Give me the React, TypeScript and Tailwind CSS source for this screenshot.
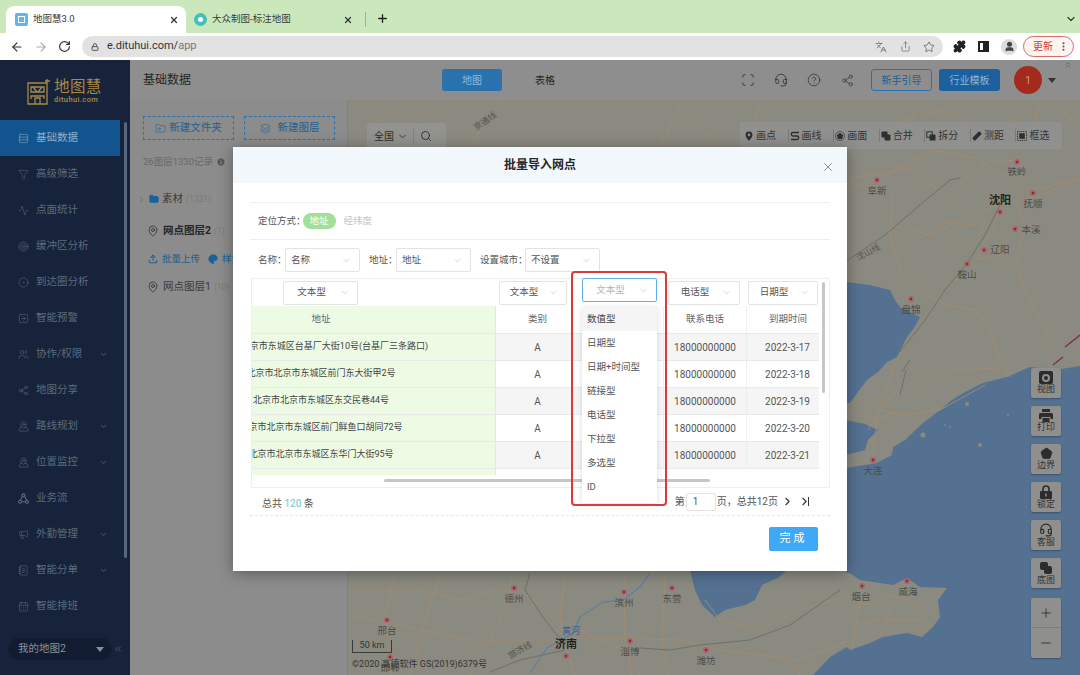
import React from 'react';
import {
  ArrowLeft, ArrowRight, RotateCw, Lock, Share, Star, Puzzle, User, X, Plus, ChevronDown, ChevronRight, ChevronsUp,
  ChevronsLeft, Scan, CircleHelp, Share2, Search, Languages, MoreVertical, Folder, MapPin, Upload, Palette, Info,
  Funnel, Target, CircleDot, Users, Megaphone, NotebookText, CalendarDays, Pentagon, Headset, Minus,
  Rows3, Activity, SquareArrowRight, FolderInput, Layers, MapPinned,
} from 'lucide-react';

const sans = "font-['Roboto','Noto_Sans_CJK_SC',sans-serif]";

const FlowIcon: React.FC<{ size?: number; strokeWidth?: number }> = ({ size = 11, strokeWidth = 1.2 }) => (
  <svg width={size} height={size} viewBox="0 0 12 12" fill="none" stroke="currentColor" strokeWidth={strokeWidth}>
    <circle cx="6" cy="2.5" r="1.6" />
    <circle cx="2.2" cy="9.5" r="1.6" />
    <circle cx="9.8" cy="9.5" r="1.6" />
    <path d="M4.6 3.8 2.8 7.5M7.4 3.8l1.8 3.7M4 9.500h4" />
  </svg>
);

const menu = [
  { label: '基础数据', icon: Rows3, active: true },
  { label: '高级筛选', icon: Funnel },
  { label: '点面统计', icon: Activity },
  { label: '缓冲区分析', icon: Target },
  { label: '到达圈分析', icon: CircleDot },
  { label: '智能预警', icon: SquareArrowRight },
  { label: '协作/权限', icon: Users, arrow: true },
  { label: '地图分享', icon: Share2 },
  { label: '路线规划', icon: MapPinned, arrow: true },
  { label: '位置监控', icon: MapPinned, arrow: true },
  { label: '业务流', icon: FlowIcon },
  { label: '外勤管理', icon: Megaphone, arrow: true },
  { label: '智能分单', icon: NotebookText, arrow: true },
  { label: '智能排班', icon: CalendarDays },
];

const rows = [
  { addr: '北京市北京市东城区台基厂大街10号(台基厂三条路口)', date: '2022-3-17' },
  { addr: '北京市北京市东城区前门东大街甲2号', date: '2022-3-18' },
  { addr: '北京市北京市东城区东交民巷44号', date: '2022-3-19' },
  { addr: '北京市北京市东城区前门鲜鱼口胡同72号', date: '2022-3-20' },
  { addr: '北京市北京市东城区东华门大街95号', date: '2022-3-21' },
];

const types = ['数值型', '日期型', '日期+时间型', '链接型', '电话型', '下拉型', '多选型', 'ID'];

const cities = [
  { n: '阜新', x: 877, y: 180, lx: 877, ly: 194 }, { n: '铁岭', x: 1017, y: 162, lx: 1017, ly: 175 },
  { n: '沈阳', x: 1000, y: 212, lx: 1000, ly: 204, bold: true }, { n: '抚顺', x: 1033, y: 193, lx: 1033, ly: 207 },
  { n: '本溪', x: 1015, y: 229, lx: 1031, ly: 233 }, { n: '辽阳', x: 984, y: 250, lx: 1000, ly: 253 },
  { n: '鞍山', x: 967, y: 264, lx: 967, ly: 278 }, { n: '盘锦', x: 911, y: 299, lx: 911, ly: 313 },
  { n: '大连', x: 873, y: 460, lx: 873, ly: 474 }, { n: '烟台', x: 862, y: 586, lx: 861, ly: 600 },
  { n: '威海', x: 907, y: 581, lx: 908, ly: 595 }, { n: '德州', x: 514, y: 588, lx: 514, ly: 602 },
  { n: '滨州', x: 624, y: 592, lx: 624, ly: 606 }, { n: '东营', x: 672, y: 588, lx: 672, ly: 602 },
  { n: '邢台', x: 387, y: 620, lx: 387, ly: 634 }, { n: '济南', x: 566, y: 656, lx: 566, ly: 648, bold: true },
  { n: '淄博', x: 630, y: 641, lx: 630, ly: 655 }, { n: '潍坊', x: 706, y: 650, lx: 706, ly: 664 },
  { n: '邯郸', x: 390, y: 657, lx: 390, ly: 671 },
];

const roads = [
  'M850 178 L890 172 L935 150 L975 158 L1005 175 L1035 190 L1080 178',
  'M848 190 L877 178 L905 168 L925 180 L950 198 L962 180 L990 162 L1017 160 L1030 145 L1040 100',
  'M895 250 L915 240 L950 225 L975 212 L1000 205 L1040 195 L1080 180',
  'M892 195 L890 240 L900 270 L920 290 L945 305 L975 310 L990 330 L1003 365 L1010 377',
  'M1000 205 L990 235 L975 262 L960 275 L940 295 L925 320 L905 345 L890 375 L878 410 L873 455',
  'M945 225 L960 245 L980 235 L985 220 M975 260 L1000 255 L1020 245 L1025 225 L1015 200',
  'M1015 255 L1025 290 L1040 320 L1055 345',
  'M890 225 L930 235 L945 222 L975 225',
  'M905 362 L925 385 L950 370 L1000 368 M880 410 L900 415 L940 410 L985 385',
  'M915 110 L905 147 M1040 105 L1030 125 M890 125 L940 110 L980 130 L1020 118 M1060 105 L1075 125',
  'M500 100 L470 147 M440 105 L380 147 M360 130 L400 110 M680 105 L660 147 M690 120 L720 147 M760 105 L745 147',
  'M348 615 L400 625 L470 640 L550 640 L600 638 L680 640 L720 650 L800 660 L850 640',
  'M395 573 L385 620 L390 660 L392 675 M440 573 L420 640 L410 675 M512 573 L510 600 L490 640 L470 675',
  'M348 590 L420 590 L460 600 L512 585 L560 620 L600 640 L625 650 L640 675',
  'M565 573 L560 620 L566 650 L575 675 M624 573 L625 640 L632 675 M665 573 L662 640 L668 675',
  'M705 600 L720 620 L760 630 L800 610 L850 595 M700 650 L720 630 M780 650 L800 675',
  'M850 600 L870 605 L890 595 L907 600 L925 610 M862 590 L855 630 L852 650 M905 585 L890 610 L880 635',
  'M850 625 L880 620 L925 620 M868 430 L880 410 L900 385 M850 408 L875 420 L900 410',
];

const rails = [
  'M845 262 L885 235 L920 205 L950 180 L960 178',
  'M1000 205 L985 235 L968 262 L945 290 L925 320 L900 352',
  'M530 573 L525 590 L545 620 L565 645 M565 650 L520 660 L490 672',
  'M640 648 L670 650 L700 645 L750 640 L790 625 L840 590',
  'M906 370 L900 395 M910 360 L902 372',
];

// Selects in the dialog share this look
const Pick: React.FC<{ text: string; className?: string; center?: boolean; muted?: boolean }> = ({ text, className, center, muted }) => (
  <div className={`relative flex shrink-0 items-center rounded-[2px] border bg-white ${muted ? 'border-[#64ade8]' : 'border-[#e3e3e3]'} ${center ? 'justify-center' : 'pl-[5px]'} ${className}`}>
    <span className={`text-[9.5px] ${muted ? 'text-[#b4b4b4]' : 'text-[#555]'} ${center ? 'pr-[18px]' : ''}`}>{text}</span>
    <ChevronDown size={11} strokeWidth={1} className="absolute right-[7px] text-[#aaa]" />
  </div>
);

const ToolIcon: React.FC<{ kind: number }> = ({ kind }) => {
  const c = '#2e2f30';
  return (
    <svg width="10" height="10" viewBox="0 0 10 10">
      {kind === 0 && <path d="M5 .5a3.4 3.4 0 0 0-3.4 3.4C1.6 6.3 5 9.7 5 9.7S8.4 6.3 8.4 3.9A3.4 3.4 0 0 0 5 .5zm0 4.7a1.3 1.3 0 1 1 0-2.6 1.3 1.3 0 0 1 0 2.600z" fill={c} />}
      {kind === 1 && <path d="M9 1.5H3a1.7 1.7 0 0 0 0 3.5h4a1.7 1.7 0 0 1 0 3.5H1" fill="none" stroke={c} strokeWidth="1.3" />}
      {kind === 2 && <><circle cx="5" cy="5" r="4.5" fill="none" stroke={c} strokeWidth=".6" /><path d="M5 1.8 8.2 4.2 7 8H3L1.8 4.2z" fill={c} /></>}
      {kind === 3 && <><rect x=".5" y=".5" width="6" height="6" rx="1" fill={c} /><rect x="3.5" y="3.5" width="6" height="6" rx="1" fill={c} /></>}
      {kind === 4 && <><rect x=".8" y=".8" width="5.5" height="5.5" fill="none" stroke={c} /><rect x="3.5" y="3.5" width="6" height="6" rx=".6" fill={c} /></>}
      {kind === 5 && <path d="M.8 6.5 6.2 1a1.5 1.5 0 0 1 2 0l.8.8a1.5 1.5 0 0 1 0 2L3.5 9.2a1 1 0 0 1-1.4 0L.8 7.9a1 1 0 0 1 0-1.400z" fill={c} />}
      {kind === 6 && <><rect x=".5" y=".5" width="9" height="9" fill="none" stroke={c} strokeDasharray="1 .8" /><rect x="2.2" y="2.2" width="5.6" height="5.6" fill={c} /></>}
    </svg>
  );
};

const MapView: React.FC = () => (
  <svg viewBox="348 100 732 575" className="block h-full w-full">
    <rect x="348" y="100" width="732" height="575" fill="#8b8a80" />
    <g fill="#557192">
      <path d="M846 282 L870 285 L890 290 L895 300 L900 307 L920 317 L914 328 L907 337 L897 357 L887 362 L878 372 L867 380 L858 392 L850 403 L846 403Z" />
      <path d="M846 420 L865 424 L878 430 L868 440 L865 450 L846 455Z" />
      <path d="M846 468 L877 463 L892 455 L893 447 L905 440 L923 423 L940 410 L952 400 L963 393 L983 383 L1007 377 L1030 367 L1055 370 L1080 366 L1080 675 L813 675 L830 657 L847 647 L850 650 L870 643 L883 637 L907 633 L922 637 L933 627 L940 617 L938 600 L947 588 L920 587 L907 578 L893 585 L860 580 L850 573 L846 573Z" />
      <path d="M690 570 L787 570 L778 578 L762 585 L755 600 L745 605 L725 610 L715 617 L702 605 L695 590Z" />
    </g>
    <g fill="#8b8a80">
      <circle cx="967" cy="404" r="2" /><circle cx="923" cy="435" r="2.5" /><circle cx="980" cy="445" r="2" />
      <circle cx="950" cy="427" r="1" /><circle cx="945" cy="425" r="1" /><circle cx="1008" cy="415" r="1" />
    </g>
    <g fill="none" stroke="#a28b70" strokeWidth="0.9">
      {roads.map((d, i) => <path key={i} d={d} />)}
    </g>
    <g fill="none" stroke="#6f6f6b" strokeWidth="1">
      {rails.map((d, i) => <path key={i} d={d} />)}
    </g>
    <path d="M650 573 L640 587 L623 600 L603 602 L580 617 L573 633 L547 648 L530 673" fill="none" stroke="#627f9f" strokeWidth="1.3" />
    <path d="M1065 347 L1080 335 M1053 365 L1063 357" fill="none" stroke="#7d3245" strokeWidth="1.5" />
    <g className="font-['Noto_Sans_CJK_SC',sans-serif]">
      {cities.map((c) => (
        <g key={c.n}>
          <circle cx={c.x} cy={c.y} r="3" fill="#a8646a" />
          <circle cx={c.x} cy={c.y} r="1.2" fill="#832c34" />
          <text x={c.lx} y={c.ly} textAnchor="middle" fontSize={c.bold ? 11 : 9.5} fontWeight={c.bold ? 600 : 400} fill={c.bold ? '#222' : '#4c4c48'}>{c.n}</text>
        </g>
      ))}
      <text x="571" y="634" textAnchor="middle" fontSize="9" fill="#3a6090">黄河</text>
      <text x="868" y="255" textAnchor="middle" fontSize="8.5" fill="#55554f" transform="rotate(-28 868 252)">沈山线</text>
      <text x="520" y="653" textAnchor="middle" fontSize="8.5" fill="#55554f" transform="rotate(-30 520 650)">邯济线</text>
      <text x="485" y="124" textAnchor="middle" fontSize="8.5" fill="#55554f" transform="rotate(-35 485 121)">京通线</text>
    </g>
  </svg>
);

const PrinterGlyph = () => (
  <svg width="14" height="13" viewBox="0 0 14 13" fill="#2c2c2c">
    <rect x="3" y="0" width="8" height="3" />
    <path d="M1.5 4h11A1.5 1.5 0 0 1 14 5.5V10h-2.5V8h-9v2H0V5.5A1.5 1.5 0 0 1 1.5 4z" />
    <rect x="3.5" y="9" width="7" height="4" />
  </svg>
);

const LockGlyph = () => (
  <svg width="12" height="14" viewBox="0 0 12 14">
    <path d="M3 6V4a3 3 0 0 1 6 0v2" fill="none" stroke="#2c2c2c" strokeWidth="1.6" />
    <rect x="0" y="6" width="12" height="8" rx="1" fill="#2c2c2c" />
    <rect x="5.3" y="8.5" width="1.4" height="3" fill="#8f8f8d" />
  </svg>
);

const StackGlyph = () => (
  <svg width="14" height="14" viewBox="0 0 14 14" fill="#2c2c2c">
    <rect x="1" y="1" width="8" height="8" rx="2" />
    <rect x="5" y="5" width="8" height="8" rx="2" />
  </svg>
);

const sideTools = [
  { t: '视图', icon: <div className="flex h-[13px] w-[14px] items-center justify-center rounded-[2px] bg-[#2c2c2c]"><div className="flex h-[8px] w-[8px] items-center justify-center rounded-full bg-[#8f8f8d]"><div className="h-[4px] w-[4px] rounded-full bg-[#2c2c2c]" /></div></div> },
  { t: '打印', icon: <PrinterGlyph /> },
  { t: '边界', icon: <Pentagon size={13} strokeWidth={1.5} className="fill-[#2c2c2c] text-[#2c2c2c]" /> },
  { t: '锁定', icon: <LockGlyph /> },
  { t: '客服', icon: <Headset size={14} strokeWidth={2} className="text-[#2c2c2c]" /> },
  { t: '底图', icon: <StackGlyph /> },
];

export default function App() {
  return (
    <div className={`relative h-[675px] w-[1080px] overflow-hidden bg-white ${sans}`}>
      {/* tab strip */}
      <div className="flex h-[33px] items-end bg-[#cbe8bd] pl-[6px]">
        <div className="flex h-[27px] w-[180px] items-center rounded-t-[8px] bg-white pl-[9px] pr-[7px]">
          <div className="flex h-[13px] w-[13px] items-center justify-center rounded-[2px] bg-[#62b4ee]">
            <div className="h-[7px] w-[7px] border border-white" />
          </div>
          <span className="ml-[5px] flex-1 text-[9.5px] text-[#3a3a3a]">地图慧3.0</span>
          <X size={10} strokeWidth={3} className="text-[#333]" />
        </div>
        <div className="flex h-[27px] w-[173px] items-center pl-[8px] pr-[6px]">
          <div className="flex h-[13px] w-[13px] items-center justify-center rounded-full bg-[#3fc1c0]">
            <div className="h-[5px] w-[5px] rounded-full bg-white" />
          </div>
          <span className="ml-[5px] flex-1 text-[9.5px] text-[#3a3a3a]">大众制图-标注地图</span>
          <X size={10} strokeWidth={3} className="text-[#333]" />
        </div>
        <div className="mb-[6px] ml-[6px] h-[15px] w-px bg-[#9db292]" />
        <Plus size={13} strokeWidth={2.5} className="mb-[8px] ml-[10px] text-[#222]" />
        <ChevronDown size={12} strokeWidth={2.5} className="mb-[8px] ml-[676px] text-[#2d4a2d]" />
      </div>
      {/* address bar */}
      <div className="flex h-[27px] items-center bg-white pl-[10px] pr-[6px]">
        <ArrowLeft size={14} strokeWidth={2} className="text-[#333]" />
        <ArrowRight size={14} strokeWidth={2} className="ml-[10px] text-[#aaa]" />
        <RotateCw size={13} strokeWidth={2.2} className="ml-[10px] text-[#333]" />
        <div className="ml-[11px] flex h-[21px] w-[862px] items-center rounded-full bg-[#e2e2e2] pl-[9px] pr-[8px]">
          <Lock size={8} strokeWidth={3} className="text-[#555]" />
          <span className="ml-[8px] flex-1 text-[11px] text-[#333]">e.dituhui.com/<span className="text-[#777]">app</span></span>
          <Languages size={12} strokeWidth={1.5} className="text-[#666]" />
          <Share size={11} strokeWidth={1.5} className="ml-[13px] text-[#666]" />
          <Star size={12} strokeWidth={1.5} className="ml-[12px] text-[#555]" />
        </div>
        <Puzzle size={13} strokeWidth={2} className="ml-[10px] fill-[#222] text-[#222]" />
        <div className="ml-[12px] flex h-[11px] w-[11px] justify-end border-2 border-[#222] bg-white"><div className="h-full w-[4px] bg-[#222]" /></div>
        <div className="ml-[12px] flex h-[16px] w-[16px] items-center justify-center rounded-full bg-[#dcdcdc]">
          <User size={11} strokeWidth={3} className="fill-[#444] text-[#444]" />
        </div>
        <div className="ml-[6px] flex h-[21px] w-[51px] items-center rounded-full border border-[#d76a62] bg-[#fdf3f1] pl-[9px]">
          <span className="text-[10px] text-[#cf3b30]">更新</span>
          <MoreVertical size={11} strokeWidth={2.5} className="ml-[5px] text-[#555]" />
        </div>
      </div>

      <div className="flex h-[615px]">
        {/* side menu */}
        <aside className="relative flex w-[130px] shrink-0 flex-col bg-[#16233a]">
          <div className="flex h-[60px] items-center pl-[27px] pt-[2px]">
            <svg width="24" height="27" viewBox="0 0 24 27" fill="none" stroke="#a88a45" strokeWidth="1.3">
              <path d="M1 5h19v21H1zM4 9h13v5H4zM4 21v-3h13v3M8 26v-6h5v6M20 5V1M18 3h5" />
              <path d="M6 9l4 5M15 9l-4 5" />
            </svg>
            <div className="ml-[3px] flex flex-col">
              <span className="text-[15.5px] leading-[17px] tracking-[0.4px] text-[#a88a45]">地图慧</span>
              <span className="text-[7.5px] font-medium leading-[8px] tracking-[0.4px] text-[#a88a45]">dituhui.com</span>
            </div>
          </div>
          <nav className="flex flex-col">
            {menu.map((m) => (
              <div key={m.label} className={`flex h-[36px] w-[120px] items-center pl-[18px] ${m.active ? 'bg-[#12558e] text-[#8cb0cc]' : 'text-[#5d6b7d]'}`}>
                <m.icon size={11} strokeWidth={1.2} />
                <span className="ml-[7px] flex-1 text-[10.5px]">{m.label}</span>
                {m.arrow && <ChevronDown size={9} strokeWidth={2} className="mr-[12px]" />}
              </div>
            ))}
          </nav>
          <div className="absolute left-[124px] top-[62px] h-[436px] w-[3px] rounded-full bg-[#56667c]" />
          <div className="mt-auto mb-[15px] flex items-center">
            <div className="ml-[8px] flex h-[22px] w-[104px] items-center rounded-full bg-[#121c30] pl-[10px] pr-[8px]">
              <span className="flex-1 text-[10.5px] text-[#8b8f96]">我的地图2</span>
              <div className="h-0 w-0 border-x-[4px] border-t-[5px] border-x-transparent border-t-[#8b8f96]" />
            </div>
            <ChevronsLeft size={10} strokeWidth={1.5} className="ml-[1px] text-[#66738a]" />
          </div>
        </aside>

        <div className="flex min-w-0 flex-1 flex-col">
          {/* top bar */}
          <header className="flex h-[40px] shrink-0 items-center bg-[#8e8e8e] pl-[13px] pr-[6px]">
            <span className="w-[299px] text-[12px] text-[#262626]">基础数据</span>
            <div className="flex h-[22px] w-[60px] items-center justify-center rounded-[3px] bg-[#2a72ad] text-[10px] text-[#8fb8d8]">地图</div>
            <span className="ml-[33px] w-[206px] text-[10px] text-[#262626]">表格</span>
            <Scan size={14} strokeWidth={1.5} className="text-[#333]" />
            <Headset size={14} strokeWidth={1.5} className="ml-[19px] text-[#333]" />
            <CircleHelp size={14} strokeWidth={1.3} className="ml-[19px] text-[#333]" />
            <Share2 size={13} strokeWidth={1.3} className="ml-[20px] text-[#333]" />
            <div className="ml-[17px] flex h-[22px] w-[61px] items-center justify-center rounded-[3px] border border-[#2a72ad] text-[10px] text-[#22608f]">新手引导</div>
            <div className="ml-[7px] flex h-[22px] w-[61px] items-center justify-center rounded-[3px] bg-[#1c609e] text-[10px] text-[#8fb8d8]">行业模板</div>
            <div className="ml-[14px] flex h-[28px] w-[28px] items-center justify-center rounded-full bg-[#a32b1b] text-[10px] text-[#d79a90]">1</div>
            <div className="ml-[6px] h-0 w-0 border-x-[4px] border-t-[5px] border-x-transparent border-t-[#333]" />
            <ChevronsUp size={10} className="mb-[30px] ml-[7px] text-[#666]" />
          </header>

          <div className="flex min-h-0 flex-1">
            {/* layer panel */}
            <section className="w-[218px] shrink-0 border-r border-[#808080] bg-[#8c8c8c] pl-[13px]">
              <div className="mt-[16px] flex gap-[10px]">
                <div className="flex h-[24px] w-[91px] items-center justify-center gap-[3px] border border-dashed border-[#2a72ad] text-[10.5px] text-[#22608f]">
                  <FolderInput size={11} strokeWidth={1.3} />新建文件夹
                </div>
                <div className="flex h-[24px] w-[91px] items-center justify-center gap-[7px] border border-dashed border-[#2a72ad] text-[10.5px] text-[#22608f]">
                  <Layers size={11} strokeWidth={1.3} />新建图层
                </div>
              </div>
              <div className="mt-[15px] flex h-[14px] items-center text-[9.5px] text-[#686868]">
                26图层1330记录<Info size={10} strokeWidth={2} className="ml-[3px] fill-[#585858] text-[#9a9a9a]" />
              </div>
              <div className="mt-[23px] flex h-[14px] items-center">
                <ChevronRight size={9} strokeWidth={1.5} className="-ml-[6px] text-[#555]" />
                <Folder size={10} strokeWidth={2} className="ml-[3px] fill-[#1c609e] text-[#1c609e]" />
                <span className="ml-[3px] text-[10.5px] text-[#3a3a3a]">素材</span>
                <span className="ml-[3px] text-[8.5px] text-[#7a7a7a]">(1321)</span>
              </div>
              <div className="mt-[18px] flex h-[14px] items-center pl-[4px]">
                <MapPin size={12} strokeWidth={1.5} className="text-[#2b2b2b]" />
                <span className="ml-[4px] text-[10.5px] font-bold text-[#262626]">网点图层2</span>
                <span className="ml-[3px] text-[8.5px] text-[#7a7a7a]">(1)</span>
              </div>
              <div className="mt-[14px] flex h-[14px] items-center pl-[5px] text-[9.5px] text-[#22608f]">
                <Upload size={10} strokeWidth={2.5} />
                <span className="ml-[4px]">批量上传</span>
                <Palette size={10} strokeWidth={2} className="ml-[8px] fill-[#1c609e]" />
                <span className="ml-[4px]">样式</span>
              </div>
              <div className="mt-[14px] flex h-[14px] items-center pl-[4px]">
                <MapPin size={12} strokeWidth={1.5} className="text-[#2b2b2b]" />
                <span className="ml-[4px] text-[10.5px] text-[#3a3a3a]">网点图层1</span>
                <span className="ml-[3px] text-[8.5px] text-[#7a7a7a]">(10)</span>
              </div>
            </section>

            {/* map */}
            <main className="relative min-w-0 flex-1">
              <MapView />
              <div className="absolute left-[19px] top-[23px] flex h-[26px] w-[79px] items-center rounded-[2px] bg-[#92928f] pl-[7px] text-[10px] text-[#2b2b2b]">
                全国<ChevronDown size={11} strokeWidth={1.8} className="ml-[3px]" />
                <div className="ml-[5px] h-[14px] w-px bg-[#808080]" />
                <Search size={12} strokeWidth={1.8} className="ml-[6px]" />
              </div>
              <div className="absolute left-[392px] top-[22px] flex h-[27px] w-[322px] items-center rounded-[2px] bg-[#90918e] pl-[3px]">
                {['画点', '画线', '画面', '合并', '拆分', '测距', '框选'].map((t, i) => (
                  <div key={t} className={`flex h-[13px] w-[46.5px] items-center gap-[2px] pl-[1px] text-[10px] text-[#333] ${i < 6 ? 'border-r border-[#7a7a78]' : ''}`}>
                    <ToolIcon kind={i} />{t}
                  </div>
                ))}
              </div>
              {/* side tools */}
              <div className="absolute left-[683px] top-[268px] flex w-[30px] flex-col gap-[8px]">
                {sideTools.map((b) => (
                  <div key={b.t} className="flex h-[30px] flex-col items-center justify-center rounded-[2px] bg-[#8f8f8d] text-[9px] leading-[11px] text-[#333] shadow-[0_1px_2px_rgba(0,0,0,0.3)]">
                    {b.icon}
                    {b.t}
                  </div>
                ))}
                <div className="mt-[2px] flex h-[60px] flex-col rounded-[2px] bg-[#8f8f8d] text-[#2c2c2c] shadow-[0_1px_2px_rgba(0,0,0,0.3)]">
                  <div className="flex h-[30px] items-center justify-center border-b border-[#7c7c7a]"><Plus size={14} strokeWidth={1.5} /></div>
                  <div className="flex h-[30px] items-center justify-center"><Minus size={14} strokeWidth={1.5} /></div>
                </div>
              </div>
              <div className="absolute left-[4px] top-[540px] flex h-[13px] w-[40px] items-center justify-center border-x border-b border-[#3a3a3a] text-[9px] text-[#333]">50 km</div>
              <div className="absolute left-[4px] top-[558px] text-[9px] leading-[12px] text-[#333]">©2020 高德软件 GS(2019)6379号</div>
            </main>
          </div>
        </div>
      </div>

      {/* import dialog */}
      <div className="absolute left-[233px] top-[147px] flex h-[424px] w-[614px] flex-col bg-white shadow-[0_2px_14px_rgba(0,0,0,0.35)]">
        <div className="flex h-[36px] shrink-0 items-center justify-center bg-[#f3f8fc]">
          <span className="text-[12px] font-bold text-[#262626]">批量导入网点</span>
        </div>
        <X size={14} strokeWidth={1.2} className="absolute left-[588px] top-[13px] text-[#666]" />
        <div className="mx-[17px] mt-[19px] flex h-[38px] items-center border-y border-[#eeeeee] pl-[8px]">
          <span className="text-[9.5px] text-[#555]">定位方式：</span>
          <span className="-ml-[3px] flex h-[16px] w-[33px] items-center justify-center rounded-full bg-[#9fe09a] text-[9.5px] text-white">地址</span>
          <span className="ml-[8px] text-[9.5px] text-[#c4c4c4]">经纬度</span>
        </div>
        <div className="mx-[17px] mt-[8px] flex h-[24px] items-center pl-[8px] text-[9.5px] text-[#555]">
          <span className="w-[27px] shrink-0 whitespace-nowrap">名称：</span>
          <Pick text="名称" className="h-[24px] w-[75px]" />
          <span className="ml-[9px] w-[27px] shrink-0 whitespace-nowrap">地址：</span>
          <Pick text="地址" className="h-[24px] w-[75px]" />
          <span className="ml-[9px] w-[45px] shrink-0 whitespace-nowrap">设置城市：</span>
          <Pick text="不设置" className="h-[24px] w-[75px]" />
        </div>

        {/* data table */}
        <div className="relative ml-[18px] mt-[6px] h-[210px] w-[579px] overflow-hidden rounded-[2px] border border-[#eeeeee] text-[9.5px] text-[#555]">
          <div className="flex h-[27px] items-center">
            <div className="w-[244px] pl-[31px]"><Pick text="文本型" center className="h-[24px] w-[75px]" /></div>
            <div className="w-[83px] pl-[3px]"><Pick text="文本型" center className="h-[24px] w-[68px]" /></div>
            <div className="w-[84px]" />
            <div className="w-[83px] pl-[5px]"><Pick text="电话型" center className="h-[24px] w-[72px]" /></div>
            <div className="w-[73px] pl-[2px]"><Pick text="日期型" center className="h-[24px] w-[70px]" /></div>
          </div>
          <div className="flex h-[27px] w-[567px] items-center text-[#666]">
            <div className="flex h-full w-[244px] shrink-0 items-center overflow-hidden border-r border-[#e6e6e6] bg-[#edfbe5]">
              <div className="ml-[-106px] w-[350px] shrink-0 text-center">地址</div>
            </div>
            <div className="w-[83px] text-center">类别</div>
            <div className="w-[84px]" />
            <div className="flex h-full w-[83px] items-center justify-center border-l border-[#eeeeee]">联系电话</div>
            <div className="flex h-full w-[73px] items-center justify-center border-l border-[#eeeeee] pl-[10px]"><span className="whitespace-nowrap">到期时间</span></div>
          </div>
          {rows.map((r, i) => (
            <div key={r.date} className={`flex h-[27px] w-[567px] items-center border-t border-[#e9e9e9] ${i % 2 === 0 ? 'bg-[#f5f5f5]' : 'bg-white'}`}>
              <div className="flex h-full w-[244px] shrink-0 items-center overflow-hidden border-r border-[#e6e6e6] bg-[#edfbe5]">
                <div className="ml-[-106px] w-[350px] shrink-0 text-center text-[9px] text-[#444]">{r.addr}</div>
              </div>
              <div className="w-[83px] text-center text-[10px]">A</div>
              <div className="w-[84px]" />
              <div className="flex h-full w-[83px] items-center justify-center border-l border-[#eeeeee] text-[10px]">18000000000</div>
              <div className="flex h-full w-[73px] items-center justify-center border-l border-[#eeeeee] pl-[9px] text-[10px]"><span className="whitespace-nowrap">{r.date}</span></div>
            </div>
          ))}
          <div className="flex h-[7px] w-[567px] border-t border-[#e9e9e9]">
            <div className="h-full w-[244px] border-r border-[#e6e6e6] bg-[#edfbe5]" />
          </div>
          <div className="ml-[132px] mt-[4px] h-[3px] w-[326px] rounded-full bg-[#c6c6c6]" />
          <div className="absolute left-[570px] top-[3px] h-[111px] w-[3px] rounded-full bg-[#c6c6c6]" />
        </div>

        {/* footer */}
        <div className="mx-[17px] flex h-[28px] items-center border-b border-dashed border-[#e8e8e8] pl-[12px] pr-[21px] text-[10px] text-[#555]">
          <span className="mt-[3px]">总共 <span className="text-[#6cc9c9]">120</span> 条</span>
          <span className="ml-auto">第</span>
          <span className="ml-[1px] flex h-[18px] w-[30px] items-center rounded-[2px] border border-[#e3e3e3] pl-[6px]">1</span>
          <span className="ml-[1px]">页，总共12页</span>
          <ChevronRight size={13} strokeWidth={2} className="ml-[3px] text-[#333]" />
          <ChevronRight size={13} strokeWidth={2} className="ml-[4px] text-[#333]" />
          <div className="-ml-[3px] h-[9px] w-px bg-[#333]" />
        </div>
        <div className="mr-[29px] mt-[11px] flex h-[24px] w-[49px] items-center justify-center self-end rounded-[2px] bg-[#3fa9f5] text-[11px] tracking-[3px] text-white">完成</div>

        {/* open type select, ringed in red in the source picture */}
        <div className="absolute left-[349px] top-[131px]">
          <Pick text="文本型" center muted className="h-[24px] w-[75px]" />
          <div className="mt-[5px] flex h-[196px] w-[75px] flex-col bg-white text-[9.5px] text-[#555] shadow-[0_1px_6px_rgba(0,0,0,0.14)]">
            {types.map((t, i) => (
              <div key={t} className={`flex h-[24px] items-center pl-[5px] ${i === 0 ? 'bg-[#f5f5f5] text-[#444]' : ''}`}>{t}</div>
            ))}
          </div>
        </div>
        <div className="absolute left-[338px] top-[124px] h-[235px] w-[96px] rounded-[4px] border-2 border-[#d93a3a]" />
      </div>
    </div>
  );
}
